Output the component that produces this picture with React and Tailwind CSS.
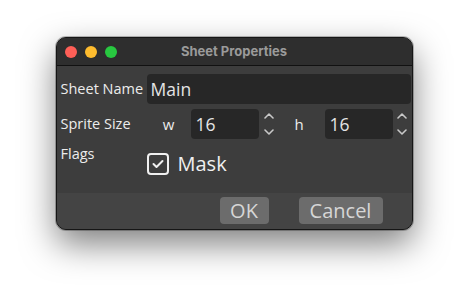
import React from 'react';

const Stepper = () => (
    <svg width="10" height="30" viewBox="0 0 10 30" fill="none" stroke="#c8c8c8" strokeWidth="1.6" strokeLinecap="round" strokeLinejoin="round">
        <path d="M1 9 L5 5 L9 9" />
        <path d="M1 21 L5 25 L9 21" />
    </svg>
);

const App = () => {
    return (
        <div className="w-[468px] h-[304px] bg-white flex justify-center pt-[37px]" style={{ fontFamily: '"Open Sans", "Noto Sans", sans-serif' }}>
            <div className="w-[357px] h-[193px] flex flex-col rounded-[10px] overflow-hidden border border-[#161616] shadow-[0_0_0_1px_rgba(0,0,0,0.25),0_14px_34px_rgba(0,0,0,0.5)] bg-[#3d3d3d]">
                {/* title bar */}
                <div className="relative h-[28px] shrink-0 bg-[#2e2e2e] border-b border-[#111] flex items-center justify-center">
                    <div className="absolute left-[8px] top-[8px] flex gap-[8px]">
                        <div className="w-[12px] h-[12px] rounded-full bg-[#fe5f57]" />
                        <div className="w-[12px] h-[12px] rounded-full bg-[#febc2e]" />
                        <div className="w-[12px] h-[12px] rounded-full bg-[#28c840]" />
                    </div>
                    <span className="text-[13px] font-bold text-[#9a9a9a] mt-[1px]" style={{ fontFamily: 'Inter, sans-serif' }}>Sheet Properties</span>
                </div>

                {/* body */}
                <div className="flex-1 grid grid-cols-[86px_1fr] gap-y-[5px] content-start pl-[4px] pr-[1px] pt-[8px] text-[#ececec]">
                    <div className="h-[30px] flex items-center text-[14.5px]">Sheet Name</div>
                    <div className="h-[30px] rounded-[4px] bg-[#272727] flex items-center pl-[4px] text-[17.5px] text-[#e4e4e4]">Main</div>

                    <div className="h-[30px] flex items-center text-[14.5px]">Sprite Size</div>
                    <div className="h-[30px] flex items-center">
                        <div className="w-[44px] text-center text-[15px]">w</div>
                        <div className="w-[68px] h-[30px] rounded-[4px] bg-[#272727] flex items-center pl-[5px] text-[17.5px] text-[#e4e4e4]">16</div>
                        <div className="ml-[5px]"><Stepper /></div>
                        <div className="w-[51px] text-center text-[15px]">h</div>
                        <div className="w-[68px] h-[30px] rounded-[4px] bg-[#272727] flex items-center pl-[5px] text-[17.5px] text-[#e4e4e4]">16</div>
                        <div className="ml-[4px]"><Stepper /></div>
                    </div>

                    <div className="text-[14.5px] leading-[20px] self-start">Flags</div>
                    <div className="flex items-center gap-[9px] pt-[9px]">
                        <div className="w-[22px] h-[22px] rounded-[4px] border-2 border-[#f0f0f0] flex items-center justify-center">
                            <svg width="12" height="10" viewBox="0 0 12 10" fill="none" stroke="#f0f0f0" strokeWidth="2" strokeLinecap="round" strokeLinejoin="round">
                                <path d="M1.5 5 L4.5 8 L10.5 2" />
                            </svg>
                        </div>
                        <span className="text-[20px] leading-[22px] text-[#f0f0f0]">Mask</span>
                    </div>
                </div>

                {/* buttons */}
                <div className="h-[36px] shrink-0 bg-[#444444] flex items-start pt-[4px] pl-[163px] gap-[30px]">
                    <button className="w-[49px] h-[27px] rounded-[4px] bg-[#6c6c6c] text-[#d6d6d6] text-[20px] leading-[27px]">OK</button>
                    <button className="w-[84px] h-[27px] rounded-[4px] bg-[#6c6c6c] text-[#d6d6d6] text-[20px] leading-[27px]">Cancel</button>
                </div>
            </div>
        </div>
    );
};

export default App;
